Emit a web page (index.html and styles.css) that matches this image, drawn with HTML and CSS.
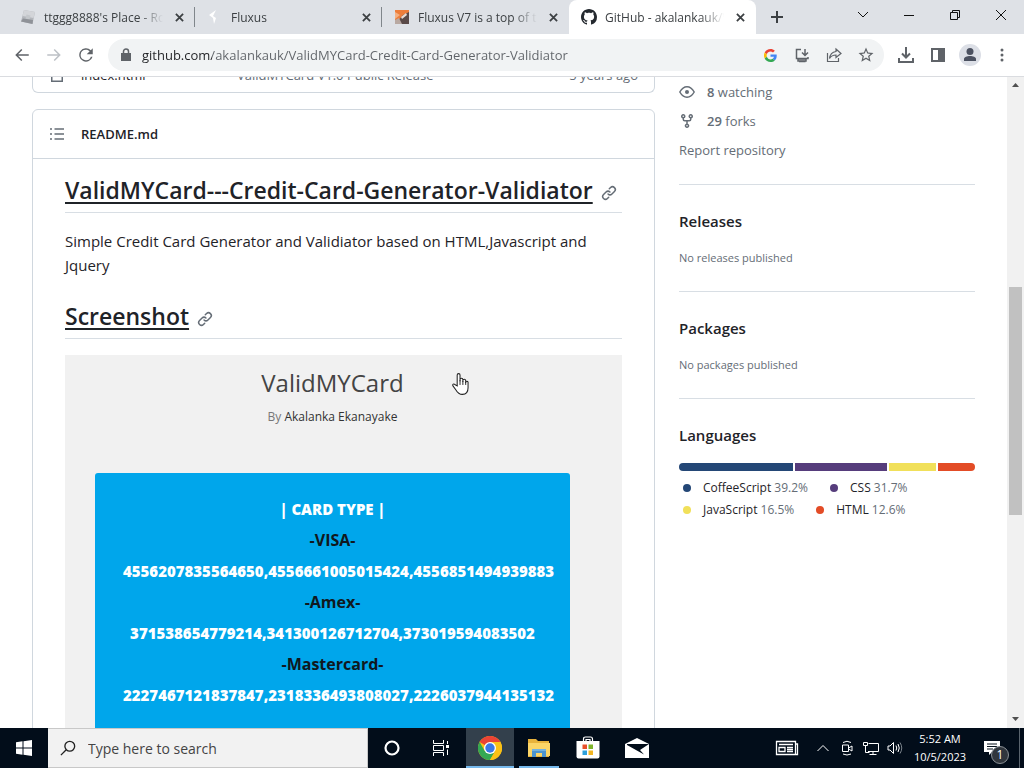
FILE: index.html
```html
<!DOCTYPE html>
<html lang="en">
<head>
<meta charset="utf-8">
<meta name="viewport" content="width=device-width, initial-scale=1">
<title>GitHub - akalankauk/ValidMYCard</title>
<link rel="stylesheet" href="styles.css">
</head>
<body>
<header class="tabstrip">
  <div class="tab">
    <svg class="favicon" viewBox="0 0 16 16"><path d="M4 1 15 3 12.500 15 1 12.500z" fill="#b3b6bb"/><path d="M4 1 15 3 13.500 9 2.500 7z" fill="#d3d5d9"/><path d="m6.500 5.500 4 1-1 4-4-1z" fill="#c4c7cb"/><path d="m1 12.500 2-3 10 1.500-.5 4z" fill="#8f9298"/></svg>
    <span class="tab-title">ttggg8888's Place - Ro</span>
    <button class="tab-close" aria-label="Close tab"><svg viewBox="0 0 10 10"><path d="m1 1 8 8M9 1 1 9"/></svg></button>
  </div>
  <div class="tab">
    <svg class="favicon" viewBox="0 0 16 16"><path d="M9 1 2 6l4 3 1 6 2-6-3-2z" fill="#fff"/></svg>
    <span class="tab-title">Fluxus</span>
    <button class="tab-close" aria-label="Close tab"><svg viewBox="0 0 10 10"><path d="m1 1 8 8M9 1 1 9"/></svg></button>
  </div>
  <div class="tab tab-last">
    <svg class="favicon" viewBox="0 0 16 16"><path d="M1 1h14v8L1 14z" fill="#ed7d3a"/><path d="M1 3 6 6 1 10z" fill="#f4b183"/><path d="m3 13 6-7 6-3v12H6z" fill="#5a4a48"/><path d="m7 8 5-4 1 2-5 4z" fill="#e9dcd4"/><path d="m1 11 4-2 3 6H1z" fill="#b9a9a2"/></svg>
    <span class="tab-title">Fluxus V7 is a top of t</span>
    <button class="tab-close" aria-label="Close tab"><svg viewBox="0 0 10 10"><path d="m1 1 8 8M9 1 1 9"/></svg></button>
  </div>
  <div class="tab tab-active">
    <svg class="favicon" viewBox="0 0 16 16"><path fill="#24292f" d="M8 0C3.580 0 0 3.580 0 8c0 3.540 2.290 6.530 5.470 7.590.4.070.55-.17.55-.38 0-.19-.01-.82-.01-1.490-2.010.37-2.530-.49-2.690-.94-.09-.23-.48-.94-.82-1.130-.28-.15-.68-.52-.01-.53.63-.01 1.080.58 1.230.82.72 1.210 1.870.87 2.330.66.07-.52.28-.87.51-1.070-1.780-.2-3.640-.89-3.640-3.950 0-.87.31-1.590.82-2.150-.08-.2-.36-1.020.08-2.120 0 0 .67-.21 2.200.82.64-.18 1.320-.27 2-.27.68 0 1.360.09 2 .27 1.530-1.040 2.200-.82 2.200-.82.44 1.100.16 1.920.08 2.120.51.56.82 1.270.82 2.150 0 3.070-1.870 3.750-3.650 3.950.29.25.54.73.54 1.480 0 1.070-.01 1.930-.01 2.200 0 .21.15.46.55.38A8.013 8.013 0 0 0 16 8c0-4.420-3.580-8-8-8z"/></svg>
    <span class="tab-title">GitHub - akalankauk/V</span>
    <button class="tab-close" aria-label="Close tab"><svg viewBox="0 0 10 10"><path d="m1 1 8 8M9 1 1 9"/></svg></button>
  </div>
  <button class="new-tab" aria-label="New tab"><svg viewBox="0 0 12 12"><path d="M6 0v12M0 6h12"/></svg></button>
  <div class="window-buttons">
    <button aria-label="Search tabs"><svg viewBox="0 0 12 12"><path d="m1 3 5 5 5-5"/></svg></button>
    <button aria-label="Minimize"><svg viewBox="0 0 12 12"><path d="M1 6.500h10"/></svg></button>
    <button aria-label="Restore"><svg viewBox="0 0 12 12"><path d="M1.500 3.500h7v7h-7zM3.500 3.500v-2h7v7h-2"/></svg></button>
    <button aria-label="Close"><svg viewBox="0 0 12 12"><path d="m1 1 10 10M11 1 1 11"/></svg></button>
  </div>
</header>

<nav class="toolbar" aria-label="Browser toolbar">
  <button class="tool" aria-label="Back"><svg viewBox="0 0 24 24"><path d="M21 11H6.830l5.590-5.590L11 4l-8 8 8 8 1.410-1.410L6.830 13H21z"/></svg></button>
  <button class="tool tool-off" aria-label="Forward"><svg viewBox="0 0 24 24"><path d="M3 11h14.170l-5.590-5.590L13 4l8 8-8 8-1.410-1.410L17.170 13H3z"/></svg></button>
  <button class="tool" aria-label="Reload"><svg viewBox="0 0 24 24"><path d="M18.400 5.600A9 9 0 1 0 20.700 14.300h-2.200A7 7 0 1 1 12 5c1.900 0 3.700.8 4.900 2.100L13 11h8V3z"/></svg></button>
  <div class="omnibox">
    <svg class="lock" viewBox="0 0 12 14"><path d="M1 5h10v8H1z" fill="#5f6368"/><path d="M3.500 6V3.500a2.500 2.500 0 0 1 5 0V6" fill="none" stroke="#5f6368" stroke-width="1.500"/></svg>
    <input class="url" type="text" aria-label="Address" value="github.com/akalankauk/ValidMYCard-Credit-Card-Generator-Validiator">
    <button class="tool" aria-label="Search with Google"><svg class="icon-google" viewBox="0 0 48 48"><path fill="#ea4335" d="M24 9.500c3.540 0 6.710 1.220 9.210 3.600l6.850-6.850C35.900 2.380 30.470 0 24 0 14.620 0 6.510 5.380 2.560 13.220l7.980 6.190C12.430 13.720 17.740 9.500 24 9.500z"/><path fill="#4285f4" d="M46.980 24.550c0-1.570-.15-3.090-.38-4.550H24v9.020h12.940c-.58 2.960-2.260 5.480-4.780 7.180l7.730 6c4.510-4.180 7.090-10.360 7.090-17.650z"/><path fill="#fbbc05" d="M10.530 28.590a14.500 14.500 0 0 1 0-9.180l-7.980-6.190a24 24 0 0 0 0 21.560z"/><path fill="#34a853" d="M24 48c6.480 0 11.930-2.130 15.890-5.810l-7.730-6c-2.150 1.450-4.920 2.300-8.160 2.300-6.260 0-11.570-4.220-13.470-9.910l-7.980 6.190C6.510 42.620 14.620 48 24 48z"/></svg></button>
    <button class="tool" aria-label="Install app"><svg class="line-icon" viewBox="0 0 16 16"><path d="M7 2.500H2.500v9h11.500V10M5 14.500h6.500M11 2v6M8 5.500l3 3 3-3"/><path d="M4 12h8v2H4z"/></svg></button>
    <button class="tool" aria-label="Share"><svg class="line-icon thin" viewBox="0 0 16 16"><path d="M1.500 6v8.500h11V11M10 2l5 4.500-5 4V8C7 8 5 9 3.500 11.500 4 7.500 6.500 5 10 4.500z"/></svg></button>
    <button class="tool" aria-label="Bookmark"><svg viewBox="0 0 24 24"><path d="m22 9.240-7.190-.62L12 2 9.190 8.630 2 9.240l5.460 4.730L5.820 21 12 17.270 18.180 21l-1.630-7.030zM12 15.400l-3.760 2.270 1-4.280-3.320-2.880 4.380-.38L12 6.100l1.710 4.040 4.380.38-3.320 2.880 1 4.280z"/></svg></button>
  </div>
  <button class="tool" aria-label="Downloads"><svg class="line-icon bold" viewBox="0 0 16 16"><path d="M8 0v10M4 6.500l4 4 4-4M1 11v4h14v-4"/></svg></button>
  <button class="tool" aria-label="Side panel"><svg class="line-icon bold" viewBox="0 0 16 16"><path d="M2 2h12v12H2z"/><path d="M9 2h5v12H9z" fill="#5f6368"/></svg></button>
  <button class="tool" aria-label="Profile"><svg class="avatar" viewBox="0 0 22 22"><circle cx="11" cy="11" r="11" fill="#dcdfe6"/><circle cx="11" cy="7.500" r="3.500" fill="#4b5160"/><path d="M5 17v-2c0-2 3-3 6-3s6 1 6 3v2z" fill="#4b5160"/></svg></button>
  <button class="tool" aria-label="Menu"><svg viewBox="0 0 18 18"><circle cx="9" cy="4" r="1.500"/><circle cx="9" cy="9" r="1.500"/><circle cx="9" cy="14" r="1.500"/></svg></button>
</nav>

<div class="viewport">
  <div class="page">
    <main class="main">
      <div class="files">
        <svg class="octicon" viewBox="0 0 16 16"><path d="M2.750 1.750h6.500l4 4v8.500H2.750z" fill="none" stroke="#656d76" stroke-width="1.500"/></svg>
        <a class="file-name" href="#">index.html</a>
        <span class="file-note">ValidMYCard V1.0 Public Release</span>
        <span class="file-age">5 years ago</span>
      </div>
      <section class="readme">
        <div class="readme-head">
          <button class="outline" aria-label="Outline"><svg class="octicon" viewBox="0 0 16 16"><path d="M5.500 3H15M5.500 8H15M5.500 13H15M1 3h2M1 8h2M1 13h2" stroke="#656d76" stroke-width="1.500"/></svg></button>
          <a class="readme-name" href="#readme">README.md</a>
        </div>
        <article class="markdown" id="readme">
          <h1><a class="heading-link" href="#readme">ValidMYCard---Credit-Card-Generator-Validiator</a><svg class="octicon" viewBox="0 0 16 16"><path fill="#656d76" d="m7.775 3.275 1.250-1.250a3.500 3.500 0 1 1 4.950 4.950l-2.500 2.500a3.500 3.500 0 0 1-4.950 0 .751.751 0 0 1 .018-1.042.751.751 0 0 1 1.042-.018 1.998 1.998 0 0 0 2.830 0l2.500-2.500a2.002 2.002 0 0 0-2.830-2.830l-1.250 1.250a.751.751 0 0 1-1.042-.018.751.751 0 0 1-.018-1.042Zm-4.690 9.640a1.998 1.998 0 0 0 2.830 0l1.250-1.250a.751.751 0 0 1 1.042.018.751.751 0 0 1 .018 1.042l-1.250 1.250a3.500 3.500 0 1 1-4.950-4.950l2.500-2.500a3.500 3.500 0 0 1 4.950 0 .751.751 0 0 1-.018 1.042.751.751 0 0 1-1.042.018 1.998 1.998 0 0 0-2.830 0l-2.500 2.500a1.998 1.998 0 0 0 0 2.830Z"/></svg></h1>
          <p>Simple Credit Card Generator and Validiator based on HTML,Javascript and Jquery</p>
          <h2><a class="heading-link" href="#screenshot">Screenshot</a><svg class="octicon" viewBox="0 0 16 16"><path fill="#656d76" d="m7.775 3.275 1.250-1.250a3.500 3.500 0 1 1 4.950 4.950l-2.500 2.500a3.500 3.500 0 0 1-4.950 0 .751.751 0 0 1 .018-1.042.751.751 0 0 1 1.042-.018 1.998 1.998 0 0 0 2.830 0l2.500-2.500a2.002 2.002 0 0 0-2.830-2.830l-1.250 1.250a.751.751 0 0 1-1.042-.018.751.751 0 0 1-.018-1.042Zm-4.690 9.640a1.998 1.998 0 0 0 2.830 0l1.250-1.250a.751.751 0 0 1 1.042.018.751.751 0 0 1 .018 1.042l-1.250 1.250a3.500 3.500 0 1 1-4.950-4.950l2.500-2.500a3.500 3.500 0 0 1 4.950 0 .751.751 0 0 1-.018 1.042.751.751 0 0 1-1.042.018 1.998 1.998 0 0 0-2.830 0l-2.500 2.500a1.998 1.998 0 0 0 0 2.830Z"/></svg></h2>
          <figure class="shot" id="screenshot">
            <div class="shot-title">ValidMYCard</div>
            <div class="shot-by">By <span class="shot-author">Akalanka Ekanayake</span></div>
            <div class="cards">
              <div class="card-line">| CARD TYPE |</div>
              <div class="card-line card-brand">-VISA-</div>
              <div class="card-line">4556207835564650,4556661005015424,4556851494939883</div>
              <div class="card-line card-brand">-Amex-</div>
              <div class="card-line">371538654779214,341300126712704,373019594083502</div>
              <div class="card-line card-brand">-Mastercard-</div>
              <div class="card-line">2227467121837847,2318336493808027,2226037944135132</div>
            </div>
          </figure>
        </article>
      </section>
    </main>
    <aside class="sidebar">
      <a class="stat" href="#"><svg class="octicon" viewBox="0 0 16 16"><path d="M.8 8C2.500 5 5 2.800 8 2.800S13.500 5 15.200 8C13.500 11 11 13.200 8 13.200S2.500 11 .8 8z" fill="none" stroke="#656d76" stroke-width="1.500"/><circle cx="8" cy="8" r="2" fill="#656d76"/></svg><span><strong>8</strong> watching</span></a>
      <a class="stat" href="#"><svg class="octicon" viewBox="0 0 16 16"><path fill="#656d76" d="M5 5.372v.878c0 .414.336.75.75.75h4.500a.75.75 0 0 0 .75-.75v-.878a2.250 2.250 0 1 1 1.500 0v.878a2.250 2.250 0 0 1-2.250 2.250h-1.500v2.128a2.251 2.251 0 1 1-1.500 0V8.500h-1.500A2.250 2.250 0 0 1 3.500 6.250v-.878a2.250 2.250 0 1 1 1.500 0ZM5 3.250a.75.75 0 1 0-1.500 0 .75.75 0 0 0 1.500 0Zm6.750.75a.75.75 0 1 0 0-1.500.75.75 0 0 0 0 1.500Zm-3 8.750a.75.75 0 1 0-1.500 0 .75.75 0 0 0 1.500 0Z"/></svg><span><strong>29</strong> forks</span></a>
      <a class="stat" href="#">Report repository</a>
      <section class="side-block side-first">
        <h3>Releases</h3>
        <p>No releases published</p>
      </section>
      <section class="side-block">
        <h3>Packages</h3>
        <p>No packages published</p>
      </section>
      <section class="side-block">
        <h3>Languages</h3>
        <div class="lang-bar">
          <span class="coffee" style="flex-grow:39.2"></span>
          <span class="css" style="flex-grow:31.7"></span>
          <span class="js" style="flex-grow:16.5"></span>
          <span class="html" style="flex-grow:12.6"></span>
        </div>
        <ul class="langs">
          <li><i class="dot coffee"></i><span><b>CoffeeScript</b> 39.2%</span></li>
          <li><i class="dot css"></i><span><b>CSS</b> 31.7%</span></li>
          <li><i class="dot js"></i><span><b>JavaScript</b> 16.5%</span></li>
          <li><i class="dot html"></i><span><b>HTML</b> 12.6%</span></li>
        </ul>
      </section>
    </aside>
  </div>
  <div class="scrollbar">
    <svg class="scroll-arrow" viewBox="0 0 17 17"><path d="m5 10 3.500-4 3.500 4z" fill="#505050"/></svg>
    <div class="scroll-track"><div class="scroll-thumb"></div></div>
    <svg class="scroll-arrow" viewBox="0 0 17 17"><path d="m5 6 3.500 4 3.500-4z" fill="#505050"/></svg>
  </div>
</div>

<footer class="taskbar">
  <button class="task" aria-label="Start"><svg viewBox="0 0 16 16" class="icon-start"><path d="M0 2.200 6.500 1.300v6.200H0zM7.500 1.200 16 0v7.500H7.500zM0 8.500h6.500v6.200L0 13.800zM7.500 8.500H16V16l-8.500-1.200z" fill="#fff"/></svg></button>
  <label class="search">
    <svg viewBox="0 0 18 18"><circle cx="11" cy="7" r="5.500"/><path d="m7 11-6 6"/></svg>
    <input type="text" placeholder="Type here to search" aria-label="Type here to search">
  </label>
  <button class="task" aria-label="Cortana"><svg viewBox="0 0 16 16" class="icon-start"><circle cx="8" cy="8" r="6.500" fill="none" stroke="#fff" stroke-width="2.200"/></svg></button>
  <button class="task" aria-label="Task view"><svg class="icon-view" viewBox="0 0 18 16"><path d="M1.500 0v3.500h10V0M1.500 16v-3.500h10V16M1.500 5.500h10v5h-10zM15.500 1v3M15.500 9.500V15" fill="none" stroke="#fff"/><path d="M14 5h3v3h-3z" fill="#fff"/></svg></button>
  <button class="task task-open task-front" aria-label="Chrome"><svg class="icon-big" viewBox="0 0 24 24"><circle cx="12" cy="12" r="12" fill="#fbc116"/><path d="M12 12 1.600 6A12 12 0 0 1 22.400 6z" fill="#ea4335"/><path d="M1.600 6A12 12 0 0 0 12 24l5.200-9L12 12 6.800 15z" fill="#34a853"/><path d="M12 6h10.400A12 12 0 0 1 12 24l5.200-9z" fill="#fbc116"/><circle cx="12" cy="12" r="6" fill="#fff"/><circle cx="12" cy="12" r="4.700" fill="#3b78e7"/></svg></button>
  <button class="task task-open" aria-label="File Explorer"><svg class="icon-big" viewBox="0 0 24 24"><path d="M1 3h8l2 2h11v16H1z" fill="#e8b33c"/><path d="M1 7h22v13H1z" fill="#fbd567"/><path d="M5 21v-8h14v8h-4v-4H9v4z" fill="#4c94cf"/><path d="M5 13h14v2H5z" fill="#73b2e0"/></svg></button>
  <button class="task" aria-label="Microsoft Store"><svg class="icon-big" viewBox="0 0 24 24"><path d="M.5 5h23v15.500q0 2-2 2h-19q-2 0-2-2z" fill="#fff"/><path d="M7.500 5V3q0-2 2-2h5q2 0 2 2v2M10 5V3.500h4V5" fill="none" stroke="#fff" stroke-width="1.200"/><path d="M6.500 8.500H11V13H6.500z" fill="#e8502c"/><path d="M12.500 8.500H17V13h-4.500z" fill="#7fb52b"/><path d="M6.500 14.500H11V19H6.500z" fill="#2da0dc"/><path d="M12.500 14.500H17V19h-4.500z" fill="#f3b622"/></svg></button>
  <button class="task" aria-label="Mail"><svg class="icon-big" viewBox="0 0 24 24"><path d="M0 8 12 2l12 6v14H0z" fill="#fff"/><path d="M2 8h22l-9 6 4 4.500L2 9z" fill="#020d1a"/></svg></button>
  <div class="tray">
    <button class="tray-news" aria-label="News"><svg viewBox="0 0 24 16"><path d="M1.500 1.500h19v13h-19zM20.500 4h2v10.500h-3M4 4.500h14M4 7.500h6v4H4zM12 7.500h6M12 9.500h6M12 11.500h6" fill="none" stroke="#fff" stroke-width="1.300"/></svg></button>
    <button aria-label="Hidden icons"><svg viewBox="0 0 16 16"><path d="m2.500 11 5.500-5.500L13.500 11"/></svg></button>
    <button aria-label="Meet now"><svg viewBox="0 0 16 16"><path d="M3.500 5h6v6.500h-6zM9.500 8 13 6v5L9.500 9M4 2.500Q8 0 12 2.500M4 14q4 2 8 0"/></svg></button>
    <button aria-label="Network"><svg viewBox="0 0 16 16"><path d="M5.500 3.500h10v8H5M10 12v2.500M6.500 14.500h7M.5 2.500h4v3h-4zM2.500 6v6.500h4"/></svg></button>
    <button aria-label="Volume"><svg viewBox="0 0 16 16"><path d="M1 6h2l3.500-3.500v11L3 10H1zM9 5.500q1.500 2.500 0 5M11 4q2.500 4 0 8"/><path d="M13 2.500q3.500 5.500 0 11" stroke="#7b838b"/></svg></button>
    <button class="clock"><span>5:52 AM</span><span>10/5/2023</span></button>
    <button class="notes" aria-label="Notifications"><svg viewBox="0 0 18 18"><path d="M1 2h16v11H9l-3 3v-3H1z" fill="#fff"/><path d="M4 5h10M4 7.500h10M4 10h6" stroke="#06121d" fill="none"/></svg><span class="badge">1</span></button>
    <button class="show-desktop" aria-label="Show desktop"></button>
  </div>
</footer>
<svg class="pointer" viewBox="0 0 18 24"><path d="M5.500 14V2.500a1.500 1.500 0 0 1 3 0V9V7.500a1.500 1.500 0 0 1 3 0V10V8.500a1.500 1.500 0 0 1 3 0V11v-1a1.300 1.300 0 0 1 2.500 0v6c0 4-2 7-6 7-3.500 0-5-1.500-7-5L1 14c-1-2 1-2.500 2-1.500z" fill="#fff" stroke="#222" stroke-width="1.100"/><path d="M8.500 8v5M11.500 9v4M14.500 10v3" stroke="#222"/></svg>
</body>
</html>
```
FILE: styles.css
```css
* { box-sizing: border-box; }
body {
  margin: 0;
  height: 100vh;
  display: flex;
  flex-direction: column;
  overflow: hidden;
  background: #fff;
  color: #1f2328;
  font-family: "Open Sans", "Noto Sans", sans-serif;
  font-size: 13px;
}
button { border: 0; padding: 0; background: none; font: inherit; color: inherit; }
input { border: 0; padding: 0; background: none; font: inherit; outline: 0; min-width: 0; }
a { color: inherit; text-decoration: none; }
svg { flex: none; display: block; }

/* Tabs */
.tabstrip { display: flex; flex: none; height: 34px; padding-left: 8px; background: #dee1e6; }
.tab {
  display: flex;
  align-items: center;
  flex: 0 1 187px;
  min-width: 0;
  gap: 8px;
  padding: 0 8px 0 12px;
  font-size: 12px;
  color: #3c4043;
  background: linear-gradient(#80868b, #80868b) right center / 1px 20px no-repeat;
}
.tab-last { background: none; }
.favicon { width: 16px; height: 16px; }
.tab-title {
  flex: 1;
  min-width: 0;
  white-space: nowrap;
  mask-image: linear-gradient(90deg, #000 calc(100% - 24px), transparent);
}
.tab-close { width: 16px; height: 16px; display: grid; place-items: center; }
.tab-close svg { width: 9px; height: 9px; stroke: #3c4043; stroke-width: 2; }
.tab-active { background: #fff; border-radius: 8px 8px 0 0; }
.new-tab { width: 42px; display: grid; place-items: center; }
.new-tab svg { width: 12px; height: 12px; stroke: #3c4043; stroke-width: 2; }
.window-buttons { display: flex; margin-left: auto; }
.window-buttons button { width: 46px; height: 29px; display: grid; place-items: center; }
.window-buttons svg { width: 12px; height: 12px; fill: none; stroke: #111; }

/* Toolbar */
.toolbar {
  display: flex;
  align-items: center;
  flex: none;
  height: 43px;
  padding: 0 6px;
  background: #fff;
  border-bottom: 1px solid #dadce0;
}
.tool { flex: none; width: 32px; height: 32px; display: grid; place-items: center; }
.tool svg { width: 18px; height: 18px; fill: #5f6368; }
.tool-off svg { fill: #bdc1c6; }
.tool .icon-google { width: 13px; height: 13px; }
.tool .line-icon { width: 16px; height: 16px; fill: none; stroke: #5f6368; stroke-width: 1.5; }
.tool .thin { stroke-width: 1.2; }
.tool .bold { stroke-width: 2; }
.tool .avatar { width: 22px; height: 22px; }
.omnibox {
  display: flex;
  align-items: center;
  flex: 1;
  min-width: 0;
  height: 32px;
  margin: 0 6px;
  padding: 0 2px 0 12px;
  background: #f1f3f4;
  border-radius: 16px;
}
.lock { width: 12px; height: 14px; margin-right: 10px; }
.url {
  flex: 1;
  color: #202124;
  -webkit-text-fill-color: transparent;
  background: linear-gradient(90deg, #202124 70px, #5f6368 70px);
  background-clip: text;
}

/* Page */
.viewport { display: flex; flex: 1; min-height: 0; overflow: hidden; }
.page { display: flex; flex: 1; min-width: 0; gap: 24px; padding: 0 32px; }
.main { flex: 1; min-width: 0; margin-top: -22px; }
.octicon { width: 16px; height: 16px; }
.files {
  display: flex;
  align-items: center;
  height: 38px;
  padding: 2px 16px 0;
  gap: 16px;
  border: 1px solid #d0d7de;
  border-top: 0;
  border-radius: 0 0 6px 6px;
}
.file-name { flex: 0 0 140px; }
.file-note { flex: 1; color: #656d76; }
.file-age { color: #656d76; }
.readme { margin-top: 16px; border: 1px solid #d0d7de; border-radius: 6px; }
.readme-head {
  display: flex;
  align-items: center;
  height: 49px;
  padding: 0 16px;
  gap: 16px;
  border-bottom: 1px solid #d0d7de;
}
.readme-name { font-weight: 600; }
.markdown { padding: 16px 32px 32px; }
.markdown h1, .markdown h2 {
  display: flex;
  align-items: center;
  gap: 8px;
  margin: 0 0 16px;
  padding-bottom: 7px;
  border-bottom: 1px solid #d8dee4;
  font-size: 23px;
  line-height: 30px;
  font-weight: 600;
  white-space: nowrap;
}
.markdown .octicon { margin-top: 6px; }
.heading-link { text-decoration: underline; text-decoration-thickness: 2px; text-underline-offset: 3px; }
.markdown p { margin: 0 0 24px; font-size: 15px; line-height: 24px; }

.shot { margin: 0; padding: 12px 52px 0 30px; background: #f1f1f1; text-align: center; }
.shot-title { font-size: 24px; line-height: 32px; color: #444; }
.shot-by { margin: 8px 0 46px; font-size: 12px; line-height: 20px; color: #777; }
.shot-author { color: #333; }
.cards { padding: 21px 28px 60px; background: #00a6eb; border-radius: 3px; }
.card-line { font-size: 15px; font-weight: 800; line-height: 31px; color: #fff; white-space: nowrap; }
.card-brand { font-size: 16px; font-weight: 700; color: #101820; }

.sidebar { flex: 0 0 296px; padding-top: 4px; color: #656d76; }
.stat { display: flex; align-items: center; gap: 12px; height: 21px; margin-bottom: 8px; }
.stat strong { font-weight: 600; }
.side-block { padding: 24px 0; border-top: 1px solid #d8dee4; }
.side-first { margin-top: 24px; }
.side-block h3 { margin: 0 0 16px; font-size: 15px; line-height: 24px; font-weight: 600; color: #1f2328; }
.side-block p { margin: 0; font-size: 11px; line-height: 18px; }
.lang-bar { display: flex; gap: 2px; height: 8px; border-radius: 6px; overflow: hidden; }
.coffee { background: #244776; }
.css { background: #563d7c; }
.js { background: #f1e05a; }
.html { background: #e34c26; }
.langs { display: flex; flex-wrap: wrap; column-gap: 18px; margin: 6px 0 0; padding: 0; list-style: none; font-size: 12px; line-height: 22px; }
.langs li { display: flex; align-items: center; gap: 12px; padding-left: 4px; }
.langs b { font-weight: 500; color: #1f2328; }
.dot { width: 8px; height: 8px; border-radius: 50%; }

.scrollbar { display: flex; flex-direction: column; flex: none; width: 17px; background: #f1f1f1; }
.scroll-arrow { width: 17px; height: 17px; }
.scroll-track { flex: 1; display: grid; grid-template-rows: 193fr 228fr 196fr; padding: 0 2px; }
.scroll-thumb { grid-row: 2; background: #c1c1c1; }

/* Taskbar */
.taskbar { display: flex; flex: none; height: 40px; background: #020d1a; color: #fff; }
.task { flex: none; width: 48px; margin-right: 1px; display: grid; place-items: center; }
.task:first-child { margin-right: 0; }
.search {
  display: flex;
  align-items: center;
  flex: 0 1 320px;
  gap: 12px;
  padding: 0 12px;
  background: #f2f2f2;
  border: 1px solid #c8c8c8;
  border-left: 0;
}
.search svg { width: 16px; height: 16px; fill: none; stroke: #222; stroke-width: 1.5; }
.search input { flex: 1; font-size: 14px; color: #333; }
.search input::placeholder { color: #444; opacity: 1; }
.icon-start { width: 16px; height: 16px; }
.icon-view { width: 18px; height: 16px; }
.icon-big { width: 24px; height: 24px; }
.task-open { background: linear-gradient(#76b9ed, #76b9ed) center bottom / 40px 2px no-repeat; }
.task-front { background: linear-gradient(#76b9ed, #76b9ed) center bottom / 48px 2px no-repeat #33404c; }
.tray { display: flex; margin-left: auto; }
.tray button { width: 24px; display: grid; place-items: center; }
.tray svg { width: 16px; height: 16px; fill: none; stroke: #fff; }
.tray .tray-news { width: 48px; }
.tray .tray-news svg { width: 24px; }
.tray .clock { width: 66px; align-content: center; font-size: 11px; line-height: 18px; }
.tray .notes { width: 46px; position: relative; }
.tray .notes svg { width: 18px; height: 18px; stroke: none; margin-right: 8px; }
.badge {
  position: absolute;
  right: 10px;
  bottom: 4px;
  width: 18px;
  height: 18px;
  border: 1px solid #8a9096;
  border-radius: 50%;
  background: #30363d;
  font-size: 12px;
  line-height: 16px;
}
.tray .show-desktop { width: 5px; border-left: 1px solid #5a646e; }

.pointer { position: absolute; left: 452px; top: 372px; width: 17px; height: 24px; }
```
